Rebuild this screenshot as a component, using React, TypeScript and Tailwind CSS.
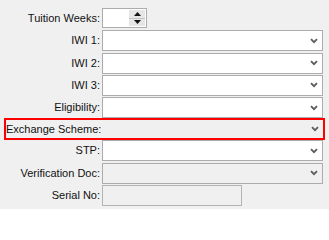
import type { ReactNode } from "react";

type RowKind = "combo" | "disabledCombo" | "disabledText";

type FieldRow = {
  label: string;
  kind: RowKind;
};

const rows: FieldRow[] = [
  { label: "IWI 1:", kind: "combo" },
  { label: "IWI 2:", kind: "combo" },
  { label: "IWI 3:", kind: "combo" },
  { label: "Eligibility:", kind: "combo" },
];

const lowerRows: FieldRow[] = [
  { label: "STP:", kind: "combo" },
  { label: "Verification Doc:", kind: "disabledCombo" },
  { label: "Serial No:", kind: "disabledText" },
];

function Chevron() {
  return (
    <svg width="8" height="6" viewBox="0 0 8 6" aria-hidden="true">
      <polyline
        points="1,1.2 4,4.2 7,1.2"
        fill="none"
        stroke="#5c5c5c"
        strokeWidth="1.8"
      />
    </svg>
  );
}

function Label({ children, width = "w-[100px]" }: { children: ReactNode; width?: string }) {
  return (
    <span className={`${width} shrink-0 whitespace-nowrap text-right text-[11px] leading-none text-[#111]`}>
      {children}
    </span>
  );
}

function Field({ kind }: { kind: RowKind }) {
  if (kind === "disabledText") {
    return <div className="h-[21px] w-[140px] border border-[#b4b4b4] bg-[#f0f0f0]" />;
  }

  return (
    <div
      className={`flex h-[21px] flex-1 items-center justify-end border border-[#acacac] pr-[4px] ${
        kind === "combo" ? "bg-white" : "bg-[#f0f0f0]"
      }`}
    >
      <Chevron />
    </div>
  );
}

function Spinner() {
  return (
    <div className="flex h-[20px] w-[45px] justify-end border border-[#acacac] bg-white p-px">
      <div className="flex w-[16px] flex-col">
        <div className="flex flex-1 items-center justify-center border-b border-[#c4c4c4] bg-[#e6e6e6]">
          <svg width="7" height="4" viewBox="0 0 7 4" aria-hidden="true">
            <polygon points="3.5,0 7,4 0,4" fill="#111" />
          </svg>
        </div>
        <div className="flex flex-1 items-center justify-center bg-[#e6e6e6]">
          <svg width="7" height="4" viewBox="0 0 7 4" aria-hidden="true">
            <polygon points="0,0 7,0 3.5,4" fill="#111" />
          </svg>
        </div>
      </div>
    </div>
  );
}

function Row({ row }: { row: FieldRow }) {
  return (
    <div className="h-[22.25px] pr-[6px]">
      <div className="flex h-[21px] items-center gap-[2px]">
        <Label>{row.label}</Label>
        <Field kind={row.kind} />
      </div>
    </div>
  );
}

export default function App() {
  return (
    <div
      className="h-[209px] w-[329px] overflow-hidden bg-[#f0f0f0] pt-[8px]"
      style={{ fontFamily: '"Liberation Sans", Arial, sans-serif' }}
    >
      <div className="h-[22.25px] pr-[6px]">
        <div className="flex h-[20px] items-center gap-[2px]">
          <Label>Tuition Weeks:</Label>
          <Spinner />
        </div>
      </div>

      {rows.map((row) => (
        <Row key={row.label} row={row} />
      ))}

      {/* highlighted row */}
      <div className="h-[22.25px] px-[4px]">
        <div className="-mt-[1.25px] flex h-[22px] items-center gap-[2px] border-2 border-[#ff0000]">
          <Label width="w-[94px]">Exchange Scheme:</Label>
          <div className="flex h-full flex-1 items-center justify-end bg-[#f0f0f0] pr-[4px]">
            <Chevron />
          </div>
        </div>
      </div>

      {lowerRows.map((row) => (
        <Row key={row.label} row={row} />
      ))}
    </div>
  );
}
